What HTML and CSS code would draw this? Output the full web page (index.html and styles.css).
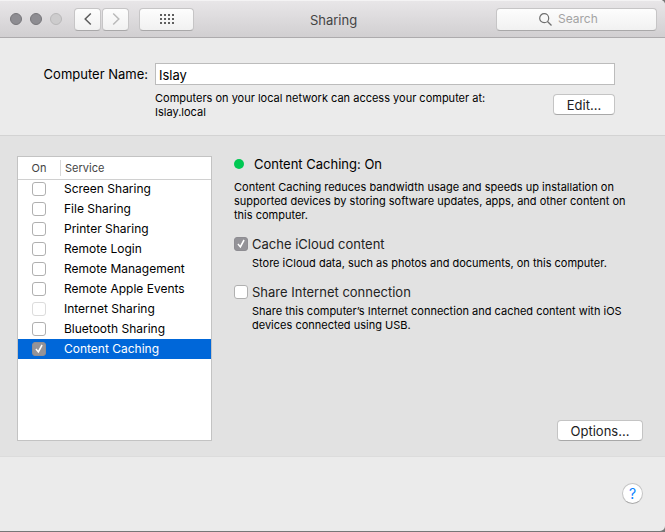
FILE: index.html
```html
<!DOCTYPE html>
<html lang="en">
<head>
  <meta charset="utf-8">
  <title>Sharing</title>
  <link rel="stylesheet" href="styles.css">
</head>
<body>
  <div class="window">
    <header class="titlebar">
      <div class="titlebar-left">
        <div class="lights">
          <button class="light" aria-label="Close"></button>
          <button class="light" aria-label="Minimize"></button>
          <button class="light light-off" aria-label="Zoom" disabled></button>
        </div>
        <div class="nav">
          <button class="tool" aria-label="Back">
            <svg width="8" height="14" viewBox="0 0 8 14"><path d="M6.8 1.5 L1.2 7 L6.8 12.5" fill="none" stroke="#5c5c5c" stroke-width="1.5"/></svg>
          </button>
          <button class="tool" aria-label="Forward" disabled>
            <svg width="8" height="14" viewBox="0 0 8 14"><path d="M1.2 1.5 L6.8 7 L1.2 12.5" fill="none" stroke="#bababa" stroke-width="1.5"/></svg>
          </button>
        </div>
        <button class="tool tool-all" aria-label="Show All">
          <svg width="14" height="10" viewBox="0 0 14 10" fill="#5f5f5f" shape-rendering="crispEdges">
            <path d="M0 0h2v2h-2z M4 0h2v2h-2z M8 0h2v2h-2z M12 0h2v2h-2z M0 4h2v2h-2z M4 4h2v2h-2z M8 4h2v2h-2z M12 4h2v2h-2z M0 8h2v2h-2z M4 8h2v2h-2z M8 8h2v2h-2z M12 8h2v2h-2z"/>
          </svg>
        </button>
      </div>
      <h1>Sharing</h1>
      <div class="search">
        <svg width="13" height="13" viewBox="0 0 13 13" fill="none" stroke="#6e6e6e" stroke-width="1.2"><circle cx="5.2" cy="5.2" r="4.5"/><path d="M8.5 8.5 L12.5 12.5"/></svg>
        <input type="text" placeholder="Search" aria-label="Search">
      </div>
    </header>

    <section class="computer">
      <label for="name">Computer Name:</label>
      <input id="name" class="name-field" type="text" value="Islay">
      <p class="small hint">Computers on your local network can access your computer at:<br>Islay.local</p>
      <button class="button edit">Edit...</button>
    </section>

    <main class="panel">
      <div class="services">
        <table>
          <thead>
            <tr><th class="on">On</th><th><span>Service</span></th></tr>
          </thead>
          <tbody>
            <tr><td class="on"><input type="checkbox" id="s1"></td><td><label for="s1">Screen Sharing</label></td></tr>
            <tr><td class="on"><input type="checkbox" id="s2"></td><td><label for="s2">File Sharing</label></td></tr>
            <tr><td class="on"><input type="checkbox" id="s3"></td><td><label for="s3">Printer Sharing</label></td></tr>
            <tr><td class="on"><input type="checkbox" id="s4"></td><td><label for="s4">Remote Login</label></td></tr>
            <tr><td class="on"><input type="checkbox" id="s5"></td><td><label for="s5">Remote Management</label></td></tr>
            <tr><td class="on"><input type="checkbox" id="s6"></td><td><label for="s6">Remote Apple Events</label></td></tr>
            <tr><td class="on"><input type="checkbox" id="s7" disabled></td><td><label for="s7">Internet Sharing</label></td></tr>
            <tr><td class="on"><input type="checkbox" id="s8"></td><td><label for="s8">Bluetooth Sharing</label></td></tr>
            <tr class="selected"><td class="on"><input type="checkbox" id="s9" checked></td><td><label for="s9">Content Caching</label></td></tr>
          </tbody>
        </table>
      </div>

      <div class="details">
        <h2><span class="status"></span>Content Caching: On</h2>
        <p class="small">Content Caching reduces bandwidth usage and speeds up installation on supported devices by storing software updates, apps, and other content on this computer.</p>
        <div class="option">
          <input type="checkbox" id="cache" checked>
          <label for="cache">Cache iCloud content</label>
          <p class="small">Store iCloud data, such as photos and documents, on this computer.</p>
        </div>
        <div class="option">
          <input type="checkbox" id="share">
          <label for="share">Share Internet connection</label>
          <p class="small">Share this computer’s Internet connection and cached content with iOS devices connected using USB.</p>
        </div>
        <button class="button options">Options...</button>
      </div>
    </main>

    <footer class="footer">
      <button class="help" aria-label="Help">?</button>
    </footer>
  </div>
</body>
</html>
```

FILE: styles.css
```css
* {
  box-sizing: border-box;
}

body {
  margin: 0;
  background: #777;
  font-family: Inter, "Liberation Sans", sans-serif;
  font-size: 13px;
  line-height: 16px;
  color: #000;
}

h1, h2, p {
  margin: 0;
  font-size: 13px;
  font-weight: normal;
}

button, input {
  font: inherit;
  margin: 0;
}

.window {
  display: flex;
  flex-direction: column;
  min-height: calc(100vh - 1px);
  background: #ebebeb;
  border-radius: 0 5px 5px 0;
  overflow: hidden;
}

/* title bar */
.titlebar {
  display: grid;
  grid-template-columns: 1fr auto 1fr;
  align-items: center;
  height: 38px;
  padding: 0 8px 0 10px;
  background: linear-gradient(#e8e6e8, #d1cfd1);
  border-top: 1px solid #f4f3f4;
  border-bottom: 1px solid #adabad;
}

.titlebar h1 {
  color: #444;
  padding-top: 2px;
}

.titlebar-left {
  display: flex;
  align-items: center;
}

.lights {
  display: flex;
  gap: 8px;
  margin-right: 12px;
}

.light {
  width: 12px;
  height: 12px;
  padding: 0;
  border: 1px solid #77767a;
  border-radius: 50%;
  background: #8e8d92;
}

.light-off {
  border-color: #b9b8b9;
  background: #cdcccd;
}

.nav {
  display: flex;
  gap: 1px;
  margin-right: 10px;
}

.tool, .search {
  display: flex;
  align-items: center;
  justify-content: center;
  height: 23px;
  border: 1px solid #c6c5c6;
  border-bottom-color: #a9a8a9;
  border-radius: 4px;
  background: linear-gradient(#fdfdfd, #f1f1f1);
}

.tool {
  width: 27px;
  padding: 0;
}

.tool-all {
  width: 55px;
}

.search {
  justify-self: end;
  width: 161px;
  gap: 6px;
}

.search input {
  width: 56px;
  padding: 0;
  border: 0;
  background: none;
  outline: none;
  font-size: 12px;
}

.search input::placeholder {
  color: #a3a3a3;
}

/* computer name */
.computer {
  display: grid;
  grid-template-columns: 148px 1fr auto;
  column-gap: 7px;
  padding: 25px 50px 16px 0;
}

.computer label {
  text-align: right;
  line-height: 22px;
}

.name-field {
  grid-column: 2 / 4;
  width: 100%;
  height: 22px;
  padding: 1px 3px 0;
  border: 1px solid #bcbcbc;
  background: #fff;
}

.small {
  font-size: 11px;
  line-height: 14px;
}

.hint {
  grid-column: 2;
  padding-top: 6px;
}

.button {
  height: 21px;
  padding: 0;
  border: 1px solid #c4c4c4;
  border-bottom-color: #a8a8a8;
  border-radius: 4px;
  background: #fff;
  color: #222;
}

.edit {
  width: 62px;
  margin-top: 9px;
}

/* services panel */
.panel {
  flex: 1;
  display: flex;
  gap: 22px;
  padding: 20px 22px 15px 17px;
  background: #e2e2e2;
  border-top: 1px solid #d3d3d3;
  border-bottom: 1px solid #dcdcdc;
}

.services {
  flex: 0 0 195px;
  background: #fff;
  border: 1px solid #c3c3c3;
}

table {
  width: 100%;
  border-collapse: collapse;
}

th {
  height: 22px;
  padding: 0;
  border-bottom: 1px solid #d0d0d0;
  font-size: 11px;
  font-weight: normal;
  text-align: left;
  color: #444;
}

th span {
  display: block;
  padding-left: 4px;
  border-left: 1px solid #d9d9d9;
}

td {
  height: 20px;
  padding: 0 0 0 4px;
  font-size: 12px;
}

.on {
  width: 42px;
  padding: 0;
  text-align: center;
}

.selected {
  background: #0067d9;
  color: #fff;
}

input[type="checkbox"] {
  display: block;
  appearance: none;
  width: 14px;
  height: 14px;
  border: 1px solid #b0b0b0;
  border-radius: 3px;
  background: #fff;
}

td input[type="checkbox"] {
  margin: 0 auto;
}

input[type="checkbox"]:disabled {
  border-color: #dcdcdc;
}

input[type="checkbox"]:checked {
  border-color: #8e8d92;
  background: #949398;
}

/* tick mark */
input[type="checkbox"]:checked::before {
  content: "";
  display: block;
  width: 12px;
  height: 12px;
  background: #fff;
  clip-path: polygon(20% 54%, 29% 46%, 43% 63%, 70% 13%, 81% 20%, 46% 85%);
}

.details {
  flex: 1;
  display: flex;
  flex-direction: column;
}

.details h2 {
  display: flex;
  align-items: center;
  gap: 10px;
  margin-bottom: 8px;
}

.status {
  width: 10px;
  height: 10px;
  border-radius: 50%;
  background: #00c853;
}

.option {
  display: grid;
  grid-template-columns: 14px 1fr;
  column-gap: 4px;
  align-items: center;
  margin-top: 14px;
}

.option label {
  color: #222;
}

.option .small {
  grid-column: 2;
  margin-top: 4px;
}

.options {
  width: 86px;
  margin-top: auto;
  align-self: flex-end;
}

.footer {
  display: flex;
  justify-content: flex-end;
  padding: 26px 22px 27px;
}

.help {
  width: 21px;
  height: 21px;
  padding: 0;
  border: 1px solid #c4c4c4;
  border-bottom-color: #a8a8a8;
  border-radius: 50%;
  background: #fff;
  color: #0a82ff;
  font-size: 14px;
}
```
